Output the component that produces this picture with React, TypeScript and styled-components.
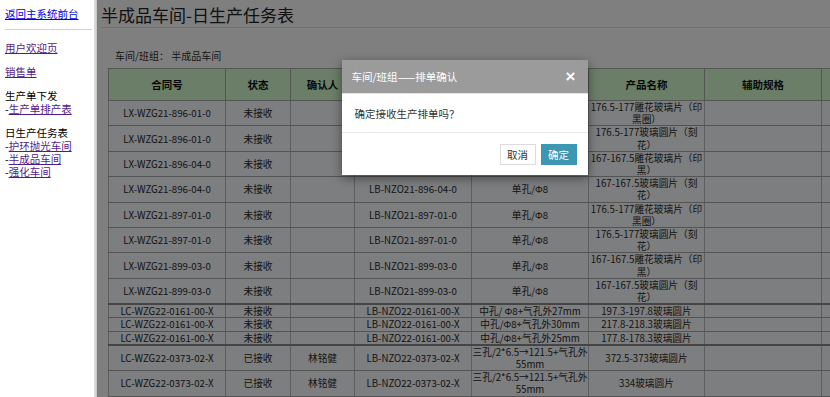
import React from 'react';
import styled, { createGlobalStyle } from 'styled-components';

const GlobalStyle = createGlobalStyle`
  html, body {
    margin: 0;
    padding: 0;
    overflow: hidden;
    background: #fff;
    font-family: 'Noto Sans CJK SC', 'Noto Sans', sans-serif;
  }
`;

type Row = {
  contract: string;
  status: string;
  confirmer: string;
  code: string;
  spec: string;
  product: string;
  sep?: boolean;
};

const rows: Row[] = [
  { contract: 'LX-WZG21-896-01-0', status: '未接收', confirmer: '', code: 'LB-NZO21-896-01-0', spec: '单孔/Φ8', product: '176.5-177雕花玻璃片（印黑圈）' },
  { contract: 'LX-WZG21-896-01-0', status: '未接收', confirmer: '', code: 'LB-NZO21-896-01-0', spec: '单孔/Φ8', product: '176.5-177玻璃圆片（刻花）' },
  { contract: 'LX-WZG21-896-04-0', status: '未接收', confirmer: '', code: 'LB-NZO21-896-04-0', spec: '单孔/Φ8', product: '167-167.5雕花玻璃片（印黑）' },
  { contract: 'LX-WZG21-896-04-0', status: '未接收', confirmer: '', code: 'LB-NZO21-896-04-0', spec: '单孔/Φ8', product: '167-167.5玻璃圆片（刻花）' },
  { contract: 'LX-WZG21-897-01-0', status: '未接收', confirmer: '', code: 'LB-NZO21-897-01-0', spec: '单孔/Φ8', product: '176.5-177雕花玻璃片（印黑圈）' },
  { contract: 'LX-WZG21-897-01-0', status: '未接收', confirmer: '', code: 'LB-NZO21-897-01-0', spec: '单孔/Φ8', product: '176.5-177玻璃圆片（刻花）' },
  { contract: 'LX-WZG21-899-03-0', status: '未接收', confirmer: '', code: 'LB-NZO21-899-03-0', spec: '单孔/Φ8', product: '167-167.5雕花玻璃片（印黑）' },
  { contract: 'LX-WZG21-899-03-0', status: '未接收', confirmer: '', code: 'LB-NZO21-899-03-0', spec: '单孔/Φ8', product: '167-167.5玻璃圆片（刻花）' },
  { contract: 'LC-WZG22-0161-00-X', status: '未接收', confirmer: '', code: 'LB-NZO22-0161-00-X', spec: '中孔/ Φ8+气孔外27mm', product: '197.3-197.8玻璃圆片', sep: true },
  { contract: 'LC-WZG22-0161-00-X', status: '未接收', confirmer: '', code: 'LB-NZO22-0161-00-X', spec: '中孔/Φ8+气孔外30mm', product: '217.8-218.3玻璃圆片' },
  { contract: 'LC-WZG22-0161-00-X', status: '未接收', confirmer: '', code: 'LB-NZO22-0161-00-X', spec: '中孔/Φ8+气孔外25mm', product: '177.8-178.3玻璃圆片' },
  { contract: 'LC-WZG22-0373-02-X', status: '已接收', confirmer: '林铭健', code: 'LB-NZO22-0373-02-X', spec: '三孔/2*6.5→121.5+气孔外55mm', product: '372.5-373玻璃圆片', sep: true },
  { contract: 'LC-WZG22-0373-02-X', status: '已接收', confirmer: '林铭健', code: 'LB-NZO22-0373-02-X', spec: '三孔/2*6.5→121.5+气孔外55mm', product: '334玻璃圆片' },
  { contract: 'LC-WZG22-0373-02-X', status: '已接收', confirmer: '林铭健', code: 'LB-NZO22-0373-02-X', spec: '三孔/2*6.5→121.5+气孔外55mm', product: '296玻璃圆片' }
];

const columns = [
  { title: '合同号', width: 117 },
  { title: '状态', width: 65 },
  { title: '确认人', width: 64 },
  { title: '产品编号', width: 117 },
  { title: '规格', width: 117 },
  { title: '产品名称', width: 116 },
  { title: '辅助规格', width: 117 },
  { title: '备注', width: 117 }
];

export default function App() {
  return (
    <>
      <GlobalStyle />
      <Page>
        <Sidebar>
          <NavLink href="#" $visited={false}>返回主系统前台</NavLink>
          <Rule />
          <NavGroup>
            <NavLink href="#" $visited>用户欢迎页</NavLink>
          </NavGroup>
          <NavGroup>
            <NavLink href="#" $visited>销售单</NavLink>
          </NavGroup>
          <NavGroup>
            <NavHeading>生产单下发</NavHeading>
            <NavItem>
              -<NavLink href="#" $visited>生产单排产表</NavLink>
            </NavItem>
          </NavGroup>
          <NavGroup>
            <NavHeading>日生产任务表</NavHeading>
            <NavItem>
              -<NavLink href="#" $visited>护环抛光车间</NavLink>
            </NavItem>
            <NavItem>
              -<NavLink href="#" $visited>半成品车间</NavLink>
            </NavItem>
            <NavItem>
              -<NavLink href="#" $visited>强化车间</NavLink>
            </NavItem>
          </NavGroup>
        </Sidebar>

        <Main>
          <PageTitle>半成品车间-日生产任务表</PageTitle>
          <Content>
            <Filter>车间/班组： 半成品车间</Filter>
            <TaskTable>
              <colgroup>
                {columns.map((c) => (
                  <col key={c.title} style={{ width: c.width }} />
                ))}
              </colgroup>
              <thead>
                <tr>
                  {columns.map((c) => (
                    <HeadCell key={c.title}>{c.title}</HeadCell>
                  ))}
                </tr>
              </thead>
              <tbody>
                {rows.map((r, i) => (
                  <BodyRow key={i} $sep={!!r.sep}>
                    <Cell>{r.contract}</Cell>
                    <Cell>{r.status}</Cell>
                    <Cell>{r.confirmer}</Cell>
                    <Cell>{r.code}</Cell>
                    <Cell>{r.spec}</Cell>
                    <Cell>{r.product}</Cell>
                    <Cell />
                    <Cell />
                  </BodyRow>
                ))}
              </tbody>
            </TaskTable>
          </Content>

          <Backdrop />
          <Dialog>
            <DialogHead>
              <DialogTitle>车间/班组——排单确认</DialogTitle>
              <CloseButton>×</CloseButton>
            </DialogHead>
            <DialogBody>确定接收生产排单吗？</DialogBody>
            <DialogFoot>
              <Button>取消</Button>
              <Button $primary>确定</Button>
            </DialogFoot>
          </Dialog>
        </Main>
      </Page>
    </>
  );
}

const Page = styled.div`
  display: flex;
  width: 830px;
  height: 397px;
  overflow: hidden;
`;

const Sidebar = styled.nav`
  flex: 0 0 96px;
  box-sizing: border-box;
  padding: 7px 0 0 5px;
  border-right: 2px solid #d8d8d8;
  background: #fff;
  font-size: 10.5px;
  line-height: 13px;
  color: #000;
`;

const NavLink = styled.a<{ $visited: boolean }>`
  color: ${(p) => (p.$visited ? '#551a8b' : '#0000ee')};
  text-decoration: underline;
`;

const Rule = styled.div`
  width: 87px;
  margin-top: 9px;
  border-top: 1px solid #d4d4d4;
`;

const NavGroup = styled.div`
  display: flex;
  flex-direction: column;
  align-items: flex-start;
  margin-top: 11px;
`;

const NavHeading = styled.div`
  color: #000;
`;

const NavItem = styled.div`
  color: #000;
`;

const Main = styled.main`
  position: relative;
  flex: 1;
  min-width: 0;
  overflow: hidden;
  background: #fff;
  border-left: 1px solid #c8c8c8;
`;

const PageTitle = styled.h1`
  margin: 0 0 0 4px;
  padding: 4px 0 1px;
  font-size: 17px;
  font-weight: normal;
  line-height: 22px;
  color: #222;
  border-bottom: 1px solid #e2e2e2;
`;

const Content = styled.div`
  padding: 21px 0 0 11px;
`;

const Filter = styled.div`
  margin-left: 7px;
  font-size: 10px;
  line-height: 13px;
  color: #333;
`;

const TaskTable = styled.table`
  margin-top: 6px;
  width: 830px;
  table-layout: fixed;
  border-collapse: collapse;
  font-size: 9.7px;
  color: #2a2a2a;
`;

const HeadCell = styled.th`
  height: 31px;
  padding: 0;
  border: 1px solid #a8a8a8;
  background: #d6ffd0;
  font-size: 10.5px;
  font-weight: bold;
  color: #111;
  text-align: center;
  vertical-align: middle;
`;

const BodyRow = styled.tr<{ $sep: boolean }>`
  background: #fbfcff;
  border-top: ${(p) => (p.$sep ? '2px solid #8a8a8a' : '1px solid #a8a8a8')};
`;

const Cell = styled.td`
  padding: 0;
  border-left: 1px solid #bdbdbd;
  border-right: 1px solid #bdbdbd;
  border-bottom: 1px solid #a8a8a8;
  line-height: 12.2px;
  text-align: center;
  vertical-align: middle;
`;

const Backdrop = styled.div`
  position: absolute;
  inset: 0;
  background: rgba(0, 0, 0, 0.5);
`;

const Dialog = styled.div`
  position: absolute;
  top: 60px;
  left: 50%;
  width: 246px;
  margin-left: -122px;
  background: #fff;
  box-shadow: 0 3px 10px rgba(0, 0, 0, 0.45);
`;

const DialogHead = styled.div`
  display: flex;
  align-items: center;
  justify-content: space-between;
  height: 33px;
  padding: 0 12px 0 10px;
  background: #9b9b9b;
  border-bottom: 1px solid #e6e6e6;
`;

const DialogTitle = styled.span`
  font-size: 10.5px;
  color: #fff;
`;

const CloseButton = styled.span`
  font-family: 'Liberation Sans', Arial, sans-serif;
  font-size: 17px;
  font-weight: bold;
  line-height: 1;
  color: #fff;
`;

const DialogBody = styled.div`
  display: flex;
  align-items: center;
  height: 38px;
  padding: 0 13px;
  font-size: 10.5px;
  color: #333;
  border-bottom: 1px solid #e6e6e6;
`;

const DialogFoot = styled.div`
  display: flex;
  justify-content: flex-end;
  gap: 5px;
  padding: 11px 11px 10px;
`;

const Button = styled.button<{ $primary?: boolean }>`
  box-sizing: border-box;
  width: 36px;
  height: 21px;
  padding: 0;
  font-family: inherit;
  font-size: 10.5px;
  line-height: 19px;
  color: ${(p) => (p.$primary ? '#fff' : '#333')};
  background: ${(p) => (p.$primary ? '#3d97b2' : '#fff')};
  border: 1px solid ${(p) => (p.$primary ? '#3d97b2' : '#dcdcdc')};
  border-radius: 0;
`;
